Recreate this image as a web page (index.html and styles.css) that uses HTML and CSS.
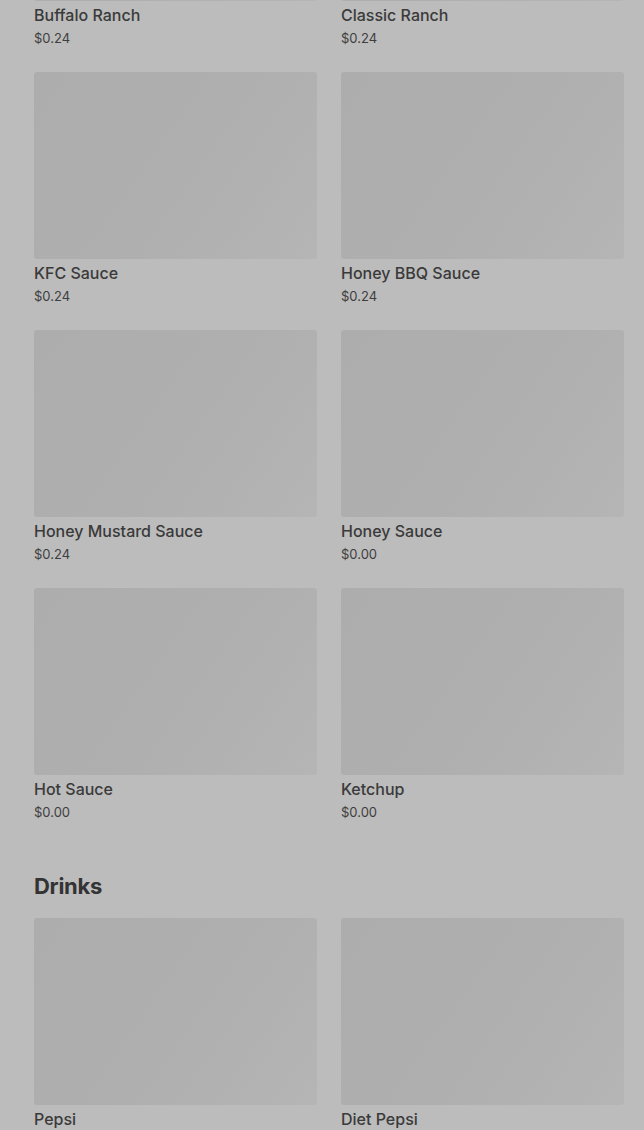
FILE: index.html
```html
<!DOCTYPE html>
<html lang="en">
<head>
  <meta charset="UTF-8" />
  <meta name="viewport" content="width=device-width, initial-scale=1.0"/>
  <title>Menu</title>
  <link rel="stylesheet" href="styles.css">
</head>
<body>

<main class="menu">

  <!-- SAUCES -->
  <section class="category sauces">
    <div class="items">
      <div class="item">
        <div class="thumb"></div>
        <h3>Buffalo Ranch</h3>
        <p class="price">$0.24</p>
      </div>
      <div class="item">
        <div class="thumb"></div>
        <h3>Classic Ranch</h3>
        <p class="price">$0.24</p>
      </div>
      <div class="item">
        <div class="thumb"></div>
        <h3>KFC Sauce</h3>
        <p class="price">$0.24</p>
      </div>
      <div class="item">
        <div class="thumb"></div>
        <h3>Honey BBQ Sauce</h3>
        <p class="price">$0.24</p>
      </div>
      <div class="item">
        <div class="thumb"></div>
        <h3>Honey Mustard Sauce</h3>
        <p class="price">$0.24</p>
      </div>
      <div class="item">
        <div class="thumb"></div>
        <h3>Honey Sauce</h3>
        <p class="price">$0.00</p>
      </div>
      <div class="item">
        <div class="thumb"></div>
        <h3>Hot Sauce</h3>
        <p class="price">$0.00</p>
      </div>
      <div class="item">
        <div class="thumb"></div>
        <h3>Ketchup</h3>
        <p class="price">$0.00</p>
      </div>
    </div>
  </section>

  <!-- DRINKS -->
  <section class="category">
    <h2 class="category-title">Drinks</h2>
    <div class="items">
      <div class="item">
        <div class="thumb"></div>
        <h3>Pepsi</h3>
      </div>
      <div class="item">
        <div class="thumb"></div>
        <h3>Diet Pepsi</h3>
      </div>
    </div>
  </section>

</main>

</body>
</html>
```

FILE: styles.css
```css
*{
  margin:0;
  padding:0;
  box-sizing:border-box;
}

body{
  background:#bcbcbc;
  color:#383838;
  font-family:Inter, "Liberation Sans", sans-serif;
  overflow:hidden;
}

.menu{
  padding:0 20px 40px 34px;
}

/* page is scrolled part way into the sauces list */
.sauces{
  margin-top:-186px;
}

.category + .category{
  margin-top:50px;
}

.category-title{
  font-size:22px;
  line-height:28px;
  font-weight:700;
  letter-spacing:-0.3px;
  color:#333;
  margin-bottom:18px;
}

.items{
  display:grid;
  grid-template-columns:1fr 1fr;
  column-gap:24px;
  row-gap:24px;
}

.thumb{
  height:187px;
  border-radius:3px;
  background:linear-gradient(125deg, #adadad 0%, #afafaf 55%, #b5b5b5 100%);
}

.item h3{
  margin-top:2px;
  margin-bottom:1px;
  font-size:16px;
  line-height:24px;
  font-weight:500;
  color:#3a3a3a;
}

.price{
  font-size:13px;
  line-height:20px;
  color:#3e3e3e;
}
```
